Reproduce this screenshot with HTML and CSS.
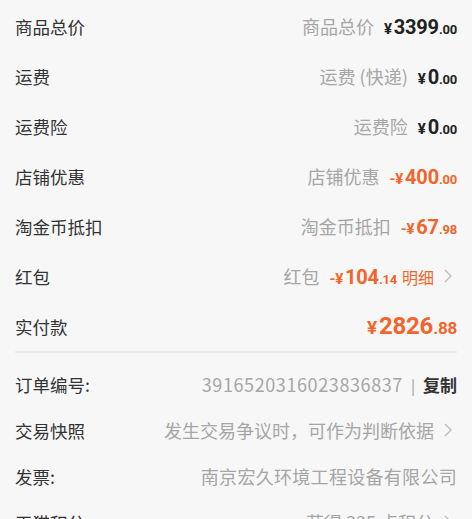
FILE: index.html
```html
<!DOCTYPE html>
<html lang="zh-CN">
<head>
    <meta charset="UTF-8">
    <meta name="viewport" content="width=device-width, initial-scale=1.0">
    <title>订单详情</title>
    <link rel="stylesheet" href="styles.css">
</head>
<body>
    <div class="price-list">
        <div class="row">
            <span class="label">商品总价</span>
            <span class="value"><span class="sub">商品总价</span><span class="money"><i>¥</i>3399<small>.00</small></span></span>
        </div>
        <div class="row">
            <span class="label">运费</span>
            <span class="value"><span class="sub">运费 (快递)</span><span class="money"><i>¥</i>0<small>.00</small></span></span>
        </div>
        <div class="row">
            <span class="label">运费险</span>
            <span class="value"><span class="sub">运费险</span><span class="money"><i>¥</i>0<small>.00</small></span></span>
        </div>
        <div class="row">
            <span class="label">店铺优惠</span>
            <span class="value"><span class="sub">店铺优惠</span><span class="money orange"><i>-¥</i>400<small>.00</small></span></span>
        </div>
        <div class="row">
            <span class="label">淘金币抵扣</span>
            <span class="value"><span class="sub">淘金币抵扣</span><span class="money orange"><i>-¥</i>67<small>.98</small></span></span>
        </div>
        <div class="row">
            <span class="label">红包</span>
            <span class="value"><span class="sub">红包</span><span class="money orange"><i>-¥</i>104<small>.14</small></span><span class="detail">明细</span><svg class="arrow" width="8" height="14" viewBox="0 0 8 14"><path d="M1 1 L7 7 L1 13" fill="none" stroke="#bbb" stroke-width="1.3"/></svg></span>
        </div>
        <div class="row">
            <span class="label">实付款</span>
            <span class="value"><span class="money orange total"><i>¥</i>2826<small>.88</small></span></span>
        </div>
    </div>

    <div class="info-list">
        <div class="info-row">
            <span class="label">订单编号:</span>
            <span class="value"><span class="sub order-no">3916520316023836837</span><span class="bar">|</span><span class="copy">复制</span></span>
        </div>
        <div class="info-row">
            <span class="label">交易快照</span>
            <span class="value"><span class="sub">发生交易争议时，可作为判断依据</span><svg class="arrow" width="8" height="14" viewBox="0 0 8 14"><path d="M1 1 L7 7 L1 13" fill="none" stroke="#bbb" stroke-width="1.3"/></svg></span>
        </div>
        <div class="info-row">
            <span class="label">发票:</span>
            <span class="value"><span class="sub wide">南京宏久环境工程设备有限公司</span></span>
        </div>
        <div class="info-row">
            <span class="label">天猫积分:</span>
            <span class="value"><span class="sub">获得 335 点积分</span><svg class="arrow" width="8" height="14" viewBox="0 0 8 14"><path d="M1 1 L7 7 L1 13" fill="none" stroke="#bbb" stroke-width="1.3"/></svg></span>
        </div>
    </div>
</body>
</html>
```

FILE: styles.css
```css
body {
    margin: 0;
    padding: 0 15px;
    background-color: #f7f7f7;
    font-family: "Noto Sans CJK SC", "Noto Sans", sans-serif;
    color: #333;
    overflow: hidden;
}

.price-list {
    padding-top: 1px;
    border-bottom: 2px solid #ebebeb;
}

.row {
    height: 50px;
    display: flex;
    justify-content: space-between;
    align-items: center;
}

.info-list {
    padding-top: 8px;
}

.info-row {
    height: 46px;
    display: flex;
    justify-content: space-between;
    align-items: center;
}

.label {
    font-size: 17.5px;
    color: #333;
}

.value {
    display: flex;
    align-items: baseline;
}

.sub {
    font-size: 18px;
    color: #a6a6a6;
}

.order-no {
    letter-spacing: 0.6px;
}

.wide {
    letter-spacing: 0.3px;
}

.money {
    margin-left: 10px;
    font-family: Roboto, "Liberation Sans", sans-serif;
    font-weight: bold;
    font-size: 20px;
    color: #222;
    letter-spacing: -0.2px;
}

.money i {
    font-style: normal;
    font-size: 15px;
    margin-right: 2px;
}

.money small {
    font-size: 13px;
    font-weight: bold;
}

.orange {
    color: #f2652a;
}

.total {
    font-size: 24px;
}

.total i {
    font-size: 19px;
}

.total small {
    font-size: 17px;
}

.detail {
    margin-left: 5px;
    font-size: 16px;
    color: #f2652a;
}

.arrow {
    margin-left: 10px;
    margin-right: 5px;
    align-self: center;
}

.bar {
    margin: 0 8px;
    font-size: 15px;
    color: #999;
}

.copy {
    font-size: 17px;
    font-weight: bold;
    color: #333;
}
```
